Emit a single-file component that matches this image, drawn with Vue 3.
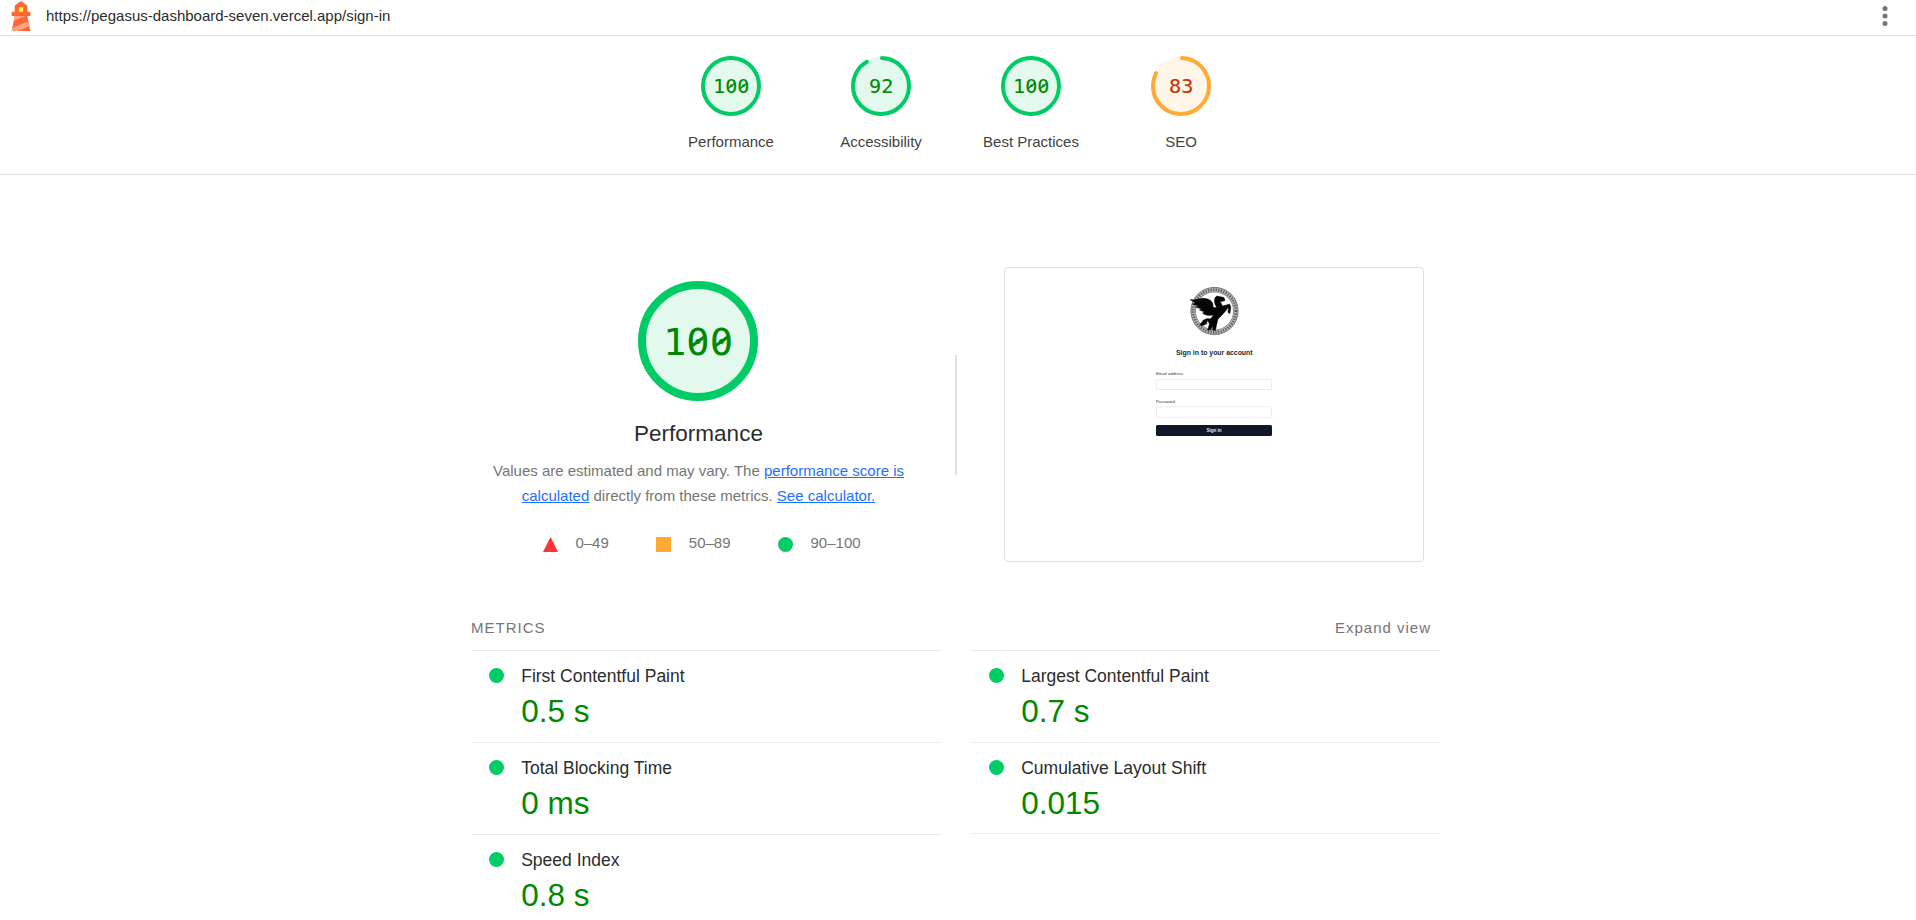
<script setup>
const scores = [
  { label: 'Performance', value: 100, tone: 'pass' },
  { label: 'Accessibility', value: 92, tone: 'pass' },
  { label: 'Best Practices', value: 100, tone: 'pass' },
  { label: 'SEO', value: 83, tone: 'average' },
]

const circumference = 2 * Math.PI * 56
const dash = (value) =>
  value === 100
    ? `${circumference} 0`
    : `${(value / 100) * circumference - 4} ${circumference}`

const columns = [
  [
    { title: 'First Contentful Paint', value: '0.5 s' },
    { title: 'Total Blocking Time', value: '0 ms' },
    { title: 'Speed Index', value: '0.8 s' },
  ],
  [
    { title: 'Largest Contentful Paint', value: '0.7 s' },
    { title: 'Cumulative Layout Shift', value: '0.015' },
  ],
]
</script>

<template>
  <div class="report">
    <header class="topbar">
      <svg class="logo" viewBox="0 0 48 48">
        <path fill="#f63" d="m14 7 10-7 10 7v10h5v7h-5l5 24H9l5-24H9v-7h5V7Z" />
        <path fill="#ffa385" d="M31.561 24H14l-1.689 8.105L31.561 24ZM18.983 48H9l1.022-4.907L35.723 32.27l1.663 7.98L18.983 48Z" />
        <path fill="#ff3" d="M20.5 10h7v7h-7z" />
      </svg>
      <span class="url">https://pegasus-dashboard-seven.vercel.app/sign-in</span>
      <svg class="menu" viewBox="0 0 24 24">
        <circle cx="12" cy="6" r="2" /><circle cx="12" cy="12" r="2" /><circle cx="12" cy="18" r="2" />
      </svg>
    </header>

    <nav class="scores">
      <div v-for="s in scores" :key="s.label" class="score" :class="s.tone">
        <svg class="gauge" viewBox="0 0 120 120">
          <circle class="base" cx="60" cy="60" r="59" />
          <circle class="arc" cx="60" cy="60" r="56" :stroke-dasharray="dash(s.value)" transform="rotate(-87.95 60 60)" />
          <text transform="translate(60.500 74) scale(1.05 1)" class="num">{{ s.value }}</text>
          <path v-if="s.value === 100" class="slash" d="M53 66l15-12M77.200 66l15-12" />
        </svg>
        <span class="score-label">{{ s.label }}</span>
      </div>
    </nav>

    <main class="content">
      <section class="overview">
        <div class="summary pass">
          <svg class="gauge big" viewBox="0 0 120 120">
            <circle class="base" cx="60" cy="60" r="59" />
            <circle class="arc" cx="60" cy="60" r="56" />
            <text transform="translate(60 74) scale(1.050 1)" class="num">100</text>
            <path class="slash" d="M52.500 66l15-11M75.900 66l15-11" />
          </svg>
          <h1>Performance</h1>
          <p>
            Values are estimated and may vary. The <a>performance score is<br />calculated</a>
            directly from these metrics. <a>See calculator.</a>
          </p>
          <div class="legend">
            <span><svg viewBox="0 0 15 15"><path d="M7.500 0L15 15H0z" fill="#f33" /></svg>0–49</span>
            <span><svg viewBox="0 0 15 15"><path d="M0 0h15v15H0z" fill="#fa3" /></svg>50–89</span>
            <span><svg viewBox="0 0 15 15"><circle cx="7.500" cy="7.500" r="7.500" fill="#0c6" /></svg>90–100</span>
          </div>
        </div>
        <div class="divider"></div>
        <div class="shot">
          <svg viewBox="0 0 418 293">
            <g transform="translate(209.500 43)">
              <circle r="21.400" fill="none" stroke="#b8b8b8" stroke-width="4.600" />
              <circle r="21.400" fill="none" stroke="#555" stroke-width="2.600" stroke-dasharray="1.200 1.400" />
              <circle r="23.600" fill="none" stroke="#555" stroke-width=".7" />
              <circle r="19.100" fill="none" stroke="#666" stroke-width=".7" />
              <path d="M-24.500-11.500C-18-10-15-13.500-9-12.500C-3-11.500-1-8-1.500-4C0-3 1.500-3 2-4C-.5-8-.5-11 1-14L2.500-15L9.500-13.500L10.500-10.500L7-9.500L5.500-10L8-5L12-6L15-7L16.300-4L15.500 2.500L13.500 1.500L14-4L11 0L8 3.500L3.500 8L2 14L1 19.500L-2 19L-1.500 15L-4 19H-7L-5 13L-7 9L-8 13L-13 15L-14.500 13.500L-11 9L-7 7.500L-4 8L-1 4C-6 5-10 4-12 2L-10 1L-15-1L-13-2L-19-4L-16-5L-22-7L-19-8Z" fill="#050505" stroke="#050505" stroke-width=".5" />
            </g>
            <text x="209.300" y="87" class="shot-title">Sign in to your account</text>
            <text x="151" y="107.300" class="shot-label">Email address</text>
            <rect x="151.500" y="111.500" width="115" height="10" rx=".7" class="field" />
            <text x="151" y="135" class="shot-label">Password</text>
            <rect x="151.500" y="138.800" width="115" height="10.500" rx=".7" class="field" />
            <rect x="151" y="157" width="116" height="11" rx="1.500" fill="#0f1728" />
            <text x="209" y="164" class="shot-button">Sign in</text>
          </svg>
        </div>
      </section>

      <div class="metrics-head">
        <span>METRICS</span>
        <span class="expand">Expand view</span>
      </div>
      <section class="metrics">
        <div v-for="(column, i) in columns" :key="i" class="column">
          <div v-for="m in column" :key="m.title" class="metric">
            <i class="dot"></i>
            <div class="metric-text">
              <div class="metric-title">{{ m.title }}</div>
              <div class="metric-value">{{ m.value }}</div>
            </div>
          </div>
        </div>
      </section>
    </main>
  </div>
</template>

<style>
html, body { margin: 0; overflow: hidden; background: #fff; }
</style>

<style scoped>
.report {
  height: 920px;
  overflow: hidden;
  box-sizing: border-box;
  font-family: "Liberation Sans", Arial, sans-serif;
  font-size: 15px;
  color: #2c2c2c;
}
.topbar {
  display: flex;
  align-items: center;
  box-sizing: border-box;
  height: 36px;
  padding: 0 16px 3px 6px;
  border-bottom: 1px solid #e0e0e0;
}
.logo { width: 30px; height: 30px; }
.url { margin-left: 10px; line-height: 20px; }
.menu { width: 30px; height: 30px; margin-left: auto; fill: #757575; }
.scores {
  display: flex;
  justify-content: center;
  box-sizing: border-box;
  height: 139px;
  padding: 20px 4px 0 0;
  border-bottom: 1px solid #e0e0e0;
}
.score { display: flex; flex-direction: column; align-items: center; width: 150px; }
.gauge { width: 60px; height: 60px; overflow: visible; }
.gauge.big { width: 120px; height: 120px; margin-right: 1px; }
.score-label { margin-top: 17px; line-height: 18px; color: #424242; }
.arc { fill: none; stroke-width: 8; stroke-linecap: round; }
.num { font: 38.400px "DejaVu Sans Mono", monospace; text-anchor: middle; stroke-width: .2; }
.big .num { font-size: 37px; stroke-width: 0; }
.slash { fill: none; stroke-width: 3; }
.pass .base { fill: #e3f9ee; }
.pass .arc { stroke: #0c6; }
.pass .num { fill: #080; stroke: #080; }
.pass .slash { stroke: #080; }
.average .base { fill: #fff5e8; }
.average .arc { stroke: #fa3; }
.average .num { fill: #c33300; stroke: #c33300; }
.content { width: 970px; margin: 0 auto; padding-right: 4px; }
.overview { display: flex; height: 425px; }
.summary { width: 455px; padding: 106px 0 0; display: flex; flex-direction: column; align-items: center; flex: none; }
h1 { margin: 20px 0 0; font-size: 22.500px; line-height: 26px; font-weight: 400; }
p { margin: 11px 0 0; line-height: 25px; color: #757575; text-align: center; white-space: nowrap; }
a { color: #1f6fff; text-decoration: underline; }
.legend { display: flex; gap: 47.500px; margin: 26px 0 0 6.500px; line-height: 18px; color: #757575; }
.legend span { display: flex; align-items: center; gap: 17.500px; }
.legend svg { width: 15px; height: 15px; margin-top: 2px; }
.divider { width: 2px; height: 120px; margin: 180px 0 0 29px; background: #e0e0e0; flex: none; }
.shot {
  box-sizing: border-box;
  width: 420px;
  height: 295px;
  margin: 92px 0 0 47px;
  border: 1px solid #e0e0e0;
  border-radius: 4px;
  flex: none;
}
.shot svg { display: block; width: 418px; height: 293px; }
.shot-title { font-size: 6.900px; font-weight: 700; text-anchor: middle; fill: #252c38; }
.shot-label { font-size: 4.300px; fill: #303640; }
.shot-button { font-size: 4.500px; font-weight: 700; fill: #e4e7ec; text-anchor: middle; }
.field { fill: #fff; stroke: #e4e6e9; stroke-width: .8; }
.metrics-head { display: flex; justify-content: space-between; height: 50px; line-height: 56px; letter-spacing: 1px; color: #757575; }
.expand { margin-right: 10px; }
.metrics { display: flex; align-items: flex-start; gap: 30px; }
.column { width: 470px; }
.metric { display: flex; box-sizing: border-box; height: 92px; border-top: 1px solid #ebebeb; padding: 15px 0 0 18px; }
.column:last-child .metric:last-child { border-bottom: 1px solid #ebebeb; }
.dot { width: 15px; height: 15px; margin-top: 2px; border-radius: 50%; background: #0c6; }
.metric-text { margin-left: 17.200px; }
.metric-title { font-size: 17.500px; line-height: 20px; }
.metric-value { margin-top: 7px; font-size: 31.500px; line-height: 36px; color: #080; }
</style>
